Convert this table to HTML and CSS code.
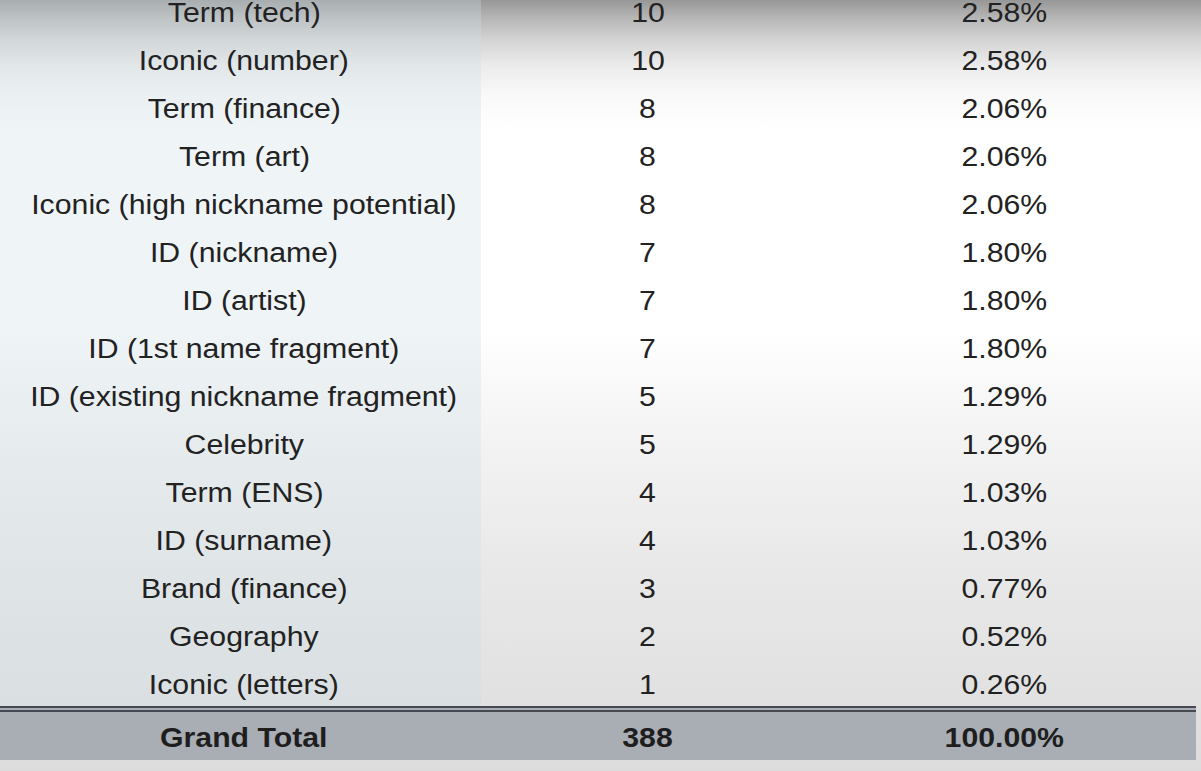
FILE: index.html
```html
<!DOCTYPE html>
<html>
<head>
<meta charset="utf-8">
<link rel="stylesheet" href="styles.css">
</head>
<body>
<div class="sheet">
  <table class="pivot">
    <tbody>
      <tr><td class="label"><span class="txt">Term (tech)</span></td><td class="count"><span class="txt">10</span></td><td class="pct"><span class="txt">2.58%</span></td></tr>
      <tr><td class="label"><span class="txt">Iconic (number)</span></td><td class="count"><span class="txt">10</span></td><td class="pct"><span class="txt">2.58%</span></td></tr>
      <tr><td class="label"><span class="txt">Term (finance)</span></td><td class="count"><span class="txt">8</span></td><td class="pct"><span class="txt">2.06%</span></td></tr>
      <tr><td class="label"><span class="txt">Term (art)</span></td><td class="count"><span class="txt">8</span></td><td class="pct"><span class="txt">2.06%</span></td></tr>
      <tr><td class="label"><span class="txt">Iconic (high nickname potential)</span></td><td class="count"><span class="txt">8</span></td><td class="pct"><span class="txt">2.06%</span></td></tr>
      <tr><td class="label"><span class="txt">ID (nickname)</span></td><td class="count"><span class="txt">7</span></td><td class="pct"><span class="txt">1.80%</span></td></tr>
      <tr><td class="label"><span class="txt">ID (artist)</span></td><td class="count"><span class="txt">7</span></td><td class="pct"><span class="txt">1.80%</span></td></tr>
      <tr><td class="label"><span class="txt">ID (1st name fragment)</span></td><td class="count"><span class="txt">7</span></td><td class="pct"><span class="txt">1.80%</span></td></tr>
      <tr><td class="label"><span class="txt">ID (existing nickname fragment)</span></td><td class="count"><span class="txt">5</span></td><td class="pct"><span class="txt">1.29%</span></td></tr>
      <tr><td class="label"><span class="txt">Celebrity</span></td><td class="count"><span class="txt">5</span></td><td class="pct"><span class="txt">1.29%</span></td></tr>
      <tr><td class="label"><span class="txt">Term (ENS)</span></td><td class="count"><span class="txt">4</span></td><td class="pct"><span class="txt">1.03%</span></td></tr>
      <tr><td class="label"><span class="txt">ID (surname)</span></td><td class="count"><span class="txt">4</span></td><td class="pct"><span class="txt">1.03%</span></td></tr>
      <tr><td class="label"><span class="txt">Brand (finance)</span></td><td class="count"><span class="txt">3</span></td><td class="pct"><span class="txt">0.77%</span></td></tr>
      <tr><td class="label"><span class="txt">Geography</span></td><td class="count"><span class="txt">2</span></td><td class="pct"><span class="txt">0.52%</span></td></tr>
      <tr><td class="label"><span class="txt">Iconic (letters)</span></td><td class="count"><span class="txt">1</span></td><td class="pct"><span class="txt">0.26%</span></td></tr>
    </tbody>
    <tfoot>
      <tr class="total"><td class="label"><span class="txt">Grand Total</span></td><td class="count"><span class="txt">388</span></td><td class="pct"><span class="txt">100.00%</span></td></tr>
    </tfoot>
  </table>
</div>
</body>
</html>
```

FILE: styles.css
```css
html, body {
  margin: 0;
  padding: 0;
}

body {
  width: 1201px;
  height: 771px;
  overflow: hidden;
  background: #dcdcdc;
  font-family: "Liberation Sans", Arial, sans-serif;
  color: #222;
}

.sheet {
  height: 771px;
  overflow: hidden;
  background: linear-gradient(to bottom,
    #979797 0px,
    #b6b6b6 18px,
    #d4d4d4 40px,
    #ebebeb 65px,
    #f9f9f9 95px,
    #ffffff 130px,
    #ffffff 330px,
    #f4f4f4 430px,
    #e9e9e9 560px,
    #e1e1e1 700px,
    #dcdcdc 771px);
}

.pivot {
  width: 1196px;
  margin-top: -14px;
  border-collapse: separate;
  border-spacing: 0;
  table-layout: fixed;
  font-size: 27px;
}

.pivot td {
  padding: 6px 0 0 0;
  line-height: 42px;
  white-space: nowrap;
  text-align: center;
}

.txt {
  display: inline-block;
  transform: scaleX(1.12);
  transform-origin: center;
}

.pivot td.label {
  width: 474px;
  padding-left: 7px;
  background: rgba(206, 220, 230, 0.32);
}

.pivot td.count {
  width: 334px;
}

.pivot td.pct {
  padding-right: 3px;
}

.total td {
  font-weight: bold;
  color: #1e1e1e;
  background: #a9adb4;
  border-top: 6px double #464a50;
}

.pivot .total td {
  padding-top: 4px;
  line-height: 44px;
}

.pivot .total td.label {
  background: #a9adb4;
}
```
